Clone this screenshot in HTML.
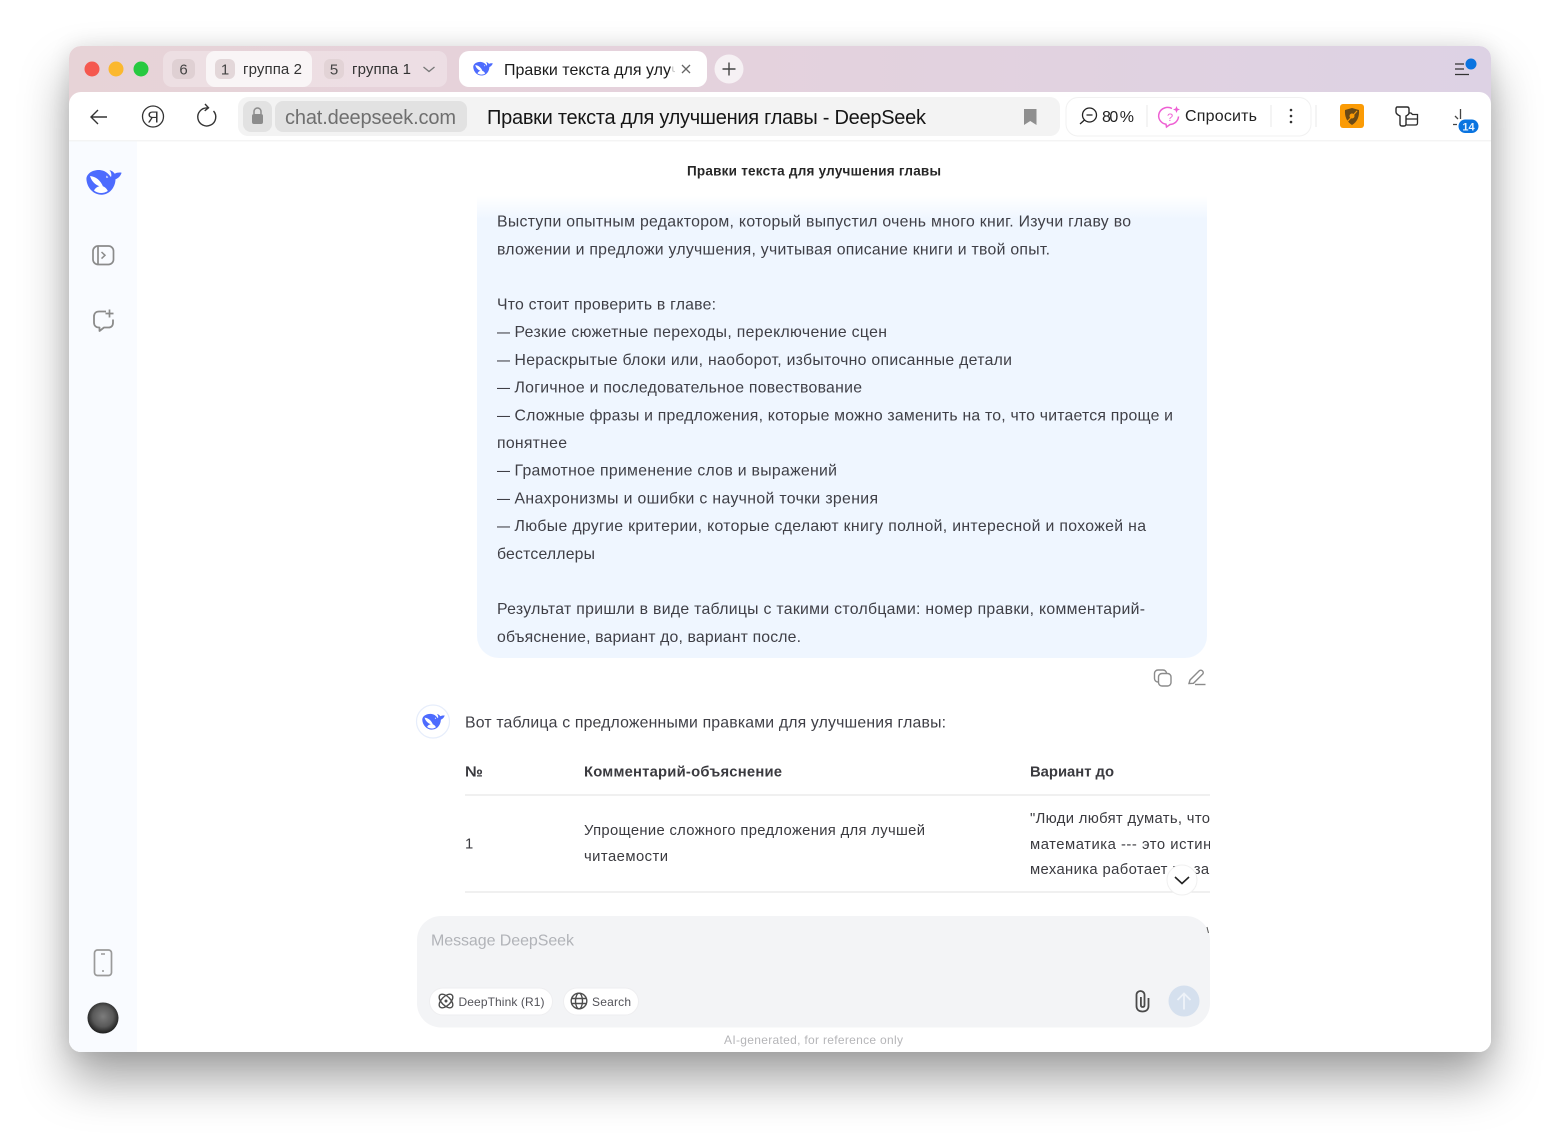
<!DOCTYPE html>
<html lang="ru"><head><meta charset="utf-8"><title>Правки текста для улучшения главы - DeepSeek</title>
<style>
html,body{margin:0;padding:0;width:1560px;height:1144px;background:#fff;overflow:hidden}
#shadow{position:absolute;left:69px;top:46px;width:1422px;height:1006px;border-radius:12px;box-shadow:0 28px 48px rgba(0,0,0,.36),0 0 22px rgba(0,0,0,.10)}
svg{position:absolute;left:0;top:0;filter:blur(.35px)}
text{font-family:"Liberation Sans",sans-serif}
</style></head><body>
<div id="shadow"></div>
<svg width="1560" height="1144" viewBox="0 0 1560 1144" xmlns="http://www.w3.org/2000/svg">
<defs>
<linearGradient id="tb" x1="0" x2="1" y1="0" y2="0"><stop offset="0" stop-color="#e7d3d7"/><stop offset=".4" stop-color="#e5d2dc"/><stop offset="1" stop-color="#ddd2e4"/></linearGradient>
<linearGradient id="bub" x1="0" x2="0" y1="0" y2="1"><stop offset="0" stop-color="#fff"/><stop offset=".05" stop-color="#eff6ff"/><stop offset="1" stop-color="#eff6ff"/></linearGradient>
<radialGradient id="ava" cx=".5" cy=".45" r=".55"><stop offset="0" stop-color="#7c7c7c"/><stop offset=".6" stop-color="#595959"/><stop offset="1" stop-color="#1c1c1c"/></radialGradient>
<clipPath id="win"><rect x="69" y="46" width="1422" height="1006" rx="12"/></clipPath>
<clipPath id="col"><rect x="1020" y="800" width="190" height="90"/></clipPath>
<symbol id="whale" viewBox="0 0 36 26">
<path fill="#4d6bfe" d="M.4 10C.8 3.500 8.500 .3 15 1.200c5.500.8 7.800 4.300 10 6.800 .8-2 .3-4.700-1.600-7 2.200.6 4.100 2 5.400 3.700 1.800-1 4.100-1.400 6.800-1-1 3.200-3.300 5.500-6.100 6.500-.1 6.700-4.500 14.400-12.500 15.400C8.500 26.600 .9 19.500 .4 10z"/>
<path fill="#fff" d="M4 7c5.500.4 10.800 4.300 13.300 11.200C11 17.300 5.800 13.500 4 7zM8 21.500c2-3.700 6.300-5.600 10-3.700 2.200 1.100 3.300 3 3.800 4.200-4.200 2.800-9.800 2.700-13.800-.5z"/>
<path fill="#fff" d="M20.500 6.500l1.800 1.900-2.100.5z"/>
</symbol>
</defs>
<g clip-path="url(#win)">
<rect x="69" y="46" width="1422" height="1006" fill="#fff"/>
<rect x="69" y="46" width="1422" height="60" fill="url(#tb)"/>
<rect x="69" y="92" width="1422" height="960" rx="12" fill="#fff"/>
<rect x="69" y="141" width="68" height="911" fill="#f9fbff"/>
<rect x="69" y="140" width="1422" height="1.500" fill="#f4f4f4"/>
</g>
<!-- traffic lights -->
<circle cx="92" cy="69" r="7.500" fill="#f5584f"/><circle cx="116" cy="69" r="7.500" fill="#fbb82e"/><circle cx="141" cy="69" r="7.500" fill="#27c940"/>
<!-- tab groups -->
<rect x="163" y="51" width="284" height="36" rx="9" fill="#fff" fill-opacity=".28"/>
<rect x="206" y="51" width="106" height="36" rx="9" fill="#f9f5f6"/>
<rect x="172" y="59" width="23" height="20" rx="6" fill="#dfd0d3"/>
<rect x="215" y="59" width="20" height="20" rx="6" fill="#e3d7d9"/>
<rect x="324" y="59" width="20" height="20" rx="6" fill="#e2d3d6"/>
<text x="183.500" y="74.500" font-size="15" fill="#444" text-anchor="middle">6</text>
<text x="225" y="74.500" font-size="15" fill="#444" text-anchor="middle">1</text>
<text x="334" y="74.500" font-size="15" fill="#444" text-anchor="middle">5</text>
<text x="243" y="74" font-size="15" fill="#333" textLength="59">группа 2</text>
<text x="352" y="74" font-size="15" fill="#333" textLength="59">группа 1</text>
<path d="M423.500 67l5.500 4.500 5.500-4.500" fill="none" stroke="#777" stroke-width="1.300"/>
<rect x="459" y="51" width="248" height="36" rx="10" fill="#fff"/>
<use href="#whale" x="473" y="61" width="20" height="15"/>
<text x="504" y="75" font-size="16" fill="#1c1c1c" textLength="167">Правки текста для улу</text>
<text x="671" y="75" font-size="16" fill="#cfcfcf">ч</text>
<rect x="675" y="55" width="29" height="28" fill="#fff"/>
<path d="M682 65l8 8M690 65l-8 8" stroke="#666" stroke-width="1.300"/>
<circle cx="729" cy="69" r="14.500" fill="#f6f1f4"/>
<path d="M729 62.500v13M722.500 69h13" stroke="#444" stroke-width="1.400"/>
<!-- top right list -->
<path d="M1455 64h9M1455 69h9M1455 74.500h14" stroke="#333" stroke-width="1.300"/>
<circle cx="1471" cy="64" r="5.500" fill="#0a74e0"/>
<!-- toolbar nav -->
<path d="M107 117H91M98 110l-7 7 7 7" fill="none" stroke="#333" stroke-width="1.400"/>
<circle cx="153" cy="116.500" r="10.500" fill="none" stroke="#333" stroke-width="1.300"/>
<text x="153" y="122.500" font-size="16" fill="#333" text-anchor="middle">Я</text>
<path d="M213.500 111a9 9 0 1 1-6-3" fill="none" stroke="#333" stroke-width="1.400"/>
<path d="M205 104l3.500 3.800-3.800 3" fill="none" stroke="#333" stroke-width="1.400"/>
<!-- address bar -->
<rect x="238" y="97" width="822" height="39" rx="10" fill="#f3f3f3"/>
<rect x="243" y="101" width="29" height="31" rx="8" fill="#e2e2e2"/>
<rect x="275" y="101" width="192" height="31" rx="8" fill="#e2e2e2"/>
<rect x="252" y="114" width="11" height="10" rx="2" fill="#8c8c8c"/>
<path d="M254 114v-2.500a3.500 3.500 0 0 1 7 0v2.500" fill="none" stroke="#8c8c8c" stroke-width="1.500"/>
<text x="285" y="124" font-size="20" fill="#6f6f6f" textLength="171">chat.deepseek.com</text>
<text x="487" y="124" font-size="20" fill="#151515" textLength="439">Правки текста для улучшения главы - DeepSeek</text>
<path d="M1024 109h12.500v16l-6.250-4-6.250 4z" fill="#8f8f8f"/>
<!-- right box -->
<rect x="1066" y="97.500" width="245" height="38.500" rx="12" fill="#fff" stroke="#f1f1f1"/>
<circle cx="1089.500" cy="115" r="7" fill="none" stroke="#222" stroke-width="1.300"/>
<path d="M1086.500 115h6M1084.500 120l-4.500 4" stroke="#222" stroke-width="1.300"/>
<text x="1102" y="122" font-size="16" fill="#222" textLength="32">80 %</text>
<path d="M1147 105v22M1271 105v22M1316 105v22" stroke="#ececec" stroke-width="1.200"/>
<path d="M1172 108.500a9 8.500 0 1 0-6 15.800l.5 2.700 3.500-2.500a9 8.500 0 0 0 8.500-8" fill="none" stroke="#ee5fd3" stroke-width="1.500"/>
<text x="1170" y="121" font-size="11" fill="#ee5fd3" text-anchor="middle">?</text>
<path d="M1176.500 106l1 2.500 2.500 1-2.500 1-1 2.500-1-2.500-2.500-1 2.500-1z" fill="#ee5fd3"/>
<text x="1185" y="121" font-size="16" fill="#222" textLength="72">Спросить</text>
<circle cx="1291" cy="110" r="1.300" fill="#333"/><circle cx="1291" cy="116" r="1.300" fill="#333"/><circle cx="1291" cy="122" r="1.300" fill="#333"/>
<rect x="1340" y="104" width="24" height="24" rx="3" fill="#fb9b05"/>
<path d="M1352 108l7 2c.5 7-2 12-7 15-5-3-7.500-8-7-15z" fill="#6b4a16"/>
<circle cx="1352" cy="116" r="2.500" fill="#fb9b05"/>
<path d="M1347 122l10-11" stroke="#fb9b05" stroke-width="1.200"/>
<path d="M1397 107h10c1.500 0 2 1 2 2v4c0 1-1 2-3 3v8c0 1.500-1 2-2 2h-2c-1 0-2-.5-2-2v-8c-2-1-4-2-4-4v-3c0-1 .5-2 1-2z" fill="none" stroke="#2a2a2a" stroke-width="1.400"/>
<path d="M1409 113h2l1.500 1.500h5v8.500c0 1-.5 2-2 2h-9M1406 119h11.500" fill="none" stroke="#2a2a2a" stroke-width="1.300"/>
<path d="M1460.500 109v10M1455 116l3 3M1453 124.500h4" stroke="#444" stroke-width="1.300"/>
<rect x="1458.500" y="119.500" width="20" height="13.500" rx="6.750" fill="#0a74e0"/>
<text x="1468.500" y="130.500" font-size="11" font-weight="700" fill="#e6f2ff" text-anchor="middle">14</text>
<!-- sidebar -->
<use href="#whale" x="86" y="169" width="36" height="26"/>
<rect x="93" y="246" width="20.500" height="18.500" rx="5" fill="none" stroke="#8b8b8b" stroke-width="1.700"/>
<path d="M98 246.500v18" stroke="#8b8b8b" stroke-width="1.700"/>
<path d="M101.500 252l3.500 3.300-3.500 3.300" fill="none" stroke="#8b8b8b" stroke-width="1.500"/>
<path d="M106 311.500h-7c-3 0-5 2-5 5v6c0 3 2 5 5 5h.5v3.500l4.500-3.500h4.500c3 0 4.500-2 4.500-5v-3" fill="none" stroke="#8b8b8b" stroke-width="1.800" stroke-linejoin="round"/>
<path d="M109.500 309.500v8M105.500 313.500h8" stroke="#8b8b8b" stroke-width="1.700"/>
<rect x="94.500" y="950" width="17" height="25.500" rx="3" fill="none" stroke="#9a9a9a" stroke-width="1.700"/>
<path d="M101 954h4" stroke="#9a9a9a" stroke-width="1.500"/><circle cx="103" cy="971" r="1" fill="#9a9a9a"/>
<circle cx="103" cy="1018" r="15.500" fill="url(#ava)"/>
<!-- header -->
<text x="687" y="175.500" font-size="13.500" font-weight="700" fill="#262626" textLength="254">Правки текста для улучшения главы</text>
<!-- bubble -->
<path d="M477 196h730v440a22 22 0 0 1-22 22H499a22 22 0 0 1-22-22z" fill="url(#bub)"/>
<g font-size="15.800" fill="#3f3f46">
<text x="497" y="226.500" textLength="634">Выступи опытным редактором, который выпустил очень много книг. Изучи главу во</text>
<text x="497" y="254.500" textLength="553">вложении и предложи улучшения, учитывая описание книги и твой опыт.</text>
<text x="497" y="309.500" textLength="219">Что стоит проверить в главе:</text>
<text x="497" y="337" textLength="13" lengthAdjust="spacingAndGlyphs">—</text><text x="514.500" y="337" textLength="372.500">Резкие сюжетные переходы, переключение сцен</text>
<text x="497" y="365" textLength="13" lengthAdjust="spacingAndGlyphs">—</text><text x="514.500" y="365" textLength="497.500">Нераскрытые блоки или, наоборот, избыточно описанные детали</text>
<text x="497" y="392.500" textLength="13" lengthAdjust="spacingAndGlyphs">—</text><text x="514.500" y="392.500" textLength="347.500">Логичное и последовательное повествование</text>
<text x="497" y="420.500" textLength="13" lengthAdjust="spacingAndGlyphs">—</text><text x="514.500" y="420.500" textLength="658.500">Сложные фразы и предложения, которые можно заменить на то, что читается проще и</text>
<text x="497" y="448" textLength="70">понятнее</text>
<text x="497" y="475.500" textLength="13" lengthAdjust="spacingAndGlyphs">—</text><text x="514.500" y="475.500" textLength="322.500">Грамотное применение слов и выражений</text>
<text x="497" y="503.500" textLength="13" lengthAdjust="spacingAndGlyphs">—</text><text x="514.500" y="503.500" textLength="363.500">Анахронизмы и ошибки с научной точки зрения</text>
<text x="497" y="531" textLength="13" lengthAdjust="spacingAndGlyphs">—</text><text x="514.500" y="531" textLength="631.500">Любые другие критерии, которые сделают книгу полной, интересной и похожей на</text>
<text x="497" y="559" textLength="98">бестселлеры</text>
<text x="497" y="614" textLength="648">Результат пришли в виде таблицы с такими столбцами: номер правки, комментарий-</text>
<text x="497" y="642" textLength="304">объяснение, вариант до, вариант после.</text>
</g>
<!-- actions -->
<rect x="1154.500" y="670" width="12" height="12" rx="3.500" fill="none" stroke="#8b8b8b" stroke-width="1.400"/>
<rect x="1158.500" y="673.500" width="12.500" height="12.500" rx="3.500" fill="#fff" stroke="#8b8b8b" stroke-width="1.400"/>
<path d="M1189 683.500l1-3.500 9-9c1-1 2.500-1 3.500 0s1 2.300 0 3.300l-9 9z" fill="none" stroke="#8b8b8b" stroke-width="1.400"/>
<path d="M1195 684.500h10.500" stroke="#8b8b8b" stroke-width="1.400"/>
<!-- answer -->
<circle cx="433" cy="721.500" r="16.500" fill="#fff" stroke="#e6edfb" stroke-width="1.200"/>
<use href="#whale" x="422" y="713" width="23" height="17"/>
<text x="465" y="727.500" font-size="15.800" fill="#3f3f46" textLength="481">Вот таблица с предложенными правками для улучшения главы:</text>
<g font-size="14.800" fill="#3a3a3f">
<text x="465" y="776.500" font-weight="700" textLength="18" lengthAdjust="spacingAndGlyphs">№</text>
<text x="584" y="776.500" font-weight="700" textLength="198">Комментарий-объяснение</text>
<text x="1030" y="776.500" font-weight="700" textLength="84">Вариант до</text>
<text x="465" y="848.500">1</text>
<text x="584" y="835" textLength="341">Упрощение сложного предложения для лучшей</text>
<text x="584" y="861" textLength="84">читаемости</text>
<g clip-path="url(#col)">
<text x="1030" y="823" textLength="180">"Люди любят думать, что</text>
<text x="1030" y="849" textLength="190">математика --- это истина</text>
<text x="1030" y="874" textLength="186">механика работает по зак</text>
</g>
</g>
<path d="M465 795h745M465 892h745" stroke="#e7e7e7" stroke-width="1.200"/>
<circle cx="1182" cy="880" r="15" fill="#fff" stroke="#f0f0f0"/>
<path d="M1175 877l7 6.500 7-6.500" fill="none" stroke="#222" stroke-width="1.600"/>
<!-- input -->
<rect x="417" y="916" width="793" height="111.500" rx="24" fill="#f3f4f6"/>
<path d="M1207 927l1.500 6" stroke="#555" stroke-width="1"/>
<text x="431" y="945.500" font-size="16" fill="#b1b3b8" textLength="143">Message DeepSeek</text>
<rect x="429.500" y="988" width="123" height="27" rx="13.500" fill="#fff" stroke="#eeeef0"/>
<rect x="563.500" y="988" width="75" height="27" rx="13.500" fill="#fff" stroke="#eeeef0"/>
<g fill="none" stroke="#4d4d4d" stroke-width="1.400">
<ellipse cx="446" cy="1001" rx="8.500" ry="4.500" transform="rotate(45 446 1001)"/>
<ellipse cx="446" cy="1001" rx="8.500" ry="4.500" transform="rotate(-45 446 1001)"/>
<circle cx="579" cy="1001" r="7.800"/><ellipse cx="579" cy="1001" rx="3.500" ry="7.800"/><path d="M571.500 998.500h15M571.500 1003.500h15"/>
</g>
<circle cx="446" cy="1001" r="1.500" fill="#4d4d4d"/>
<text x="458.500" y="1006" font-size="12" fill="#525258" textLength="86">DeepThink (R1)</text>
<text x="592" y="1006" font-size="12" fill="#525258" textLength="39">Search</text>
<path d="M1148.500 998v8c0 3.500-2.500 5.500-6 5.500s-6-2-6-5.500v-11c0-2.500 2-4 4-4s4 1.500 4 4v10c0 1.300-.8 2-1.800 2s-1.800-.7-1.800-2v-8" fill="none" stroke="#4a4a4a" stroke-width="1.800"/>
<circle cx="1184" cy="1001" r="15.500" fill="#d5e0ee"/>
<path d="M1184 1009.500v-16M1177.500 1000l6.500-6.500 6.500 6.500" fill="none" stroke="#eef3f9" stroke-width="1.800"/>
<text x="724" y="1044" font-size="12" fill="#b5b5b8" textLength="179">AI-generated, for reference only</text>
</svg>
</body></html>
